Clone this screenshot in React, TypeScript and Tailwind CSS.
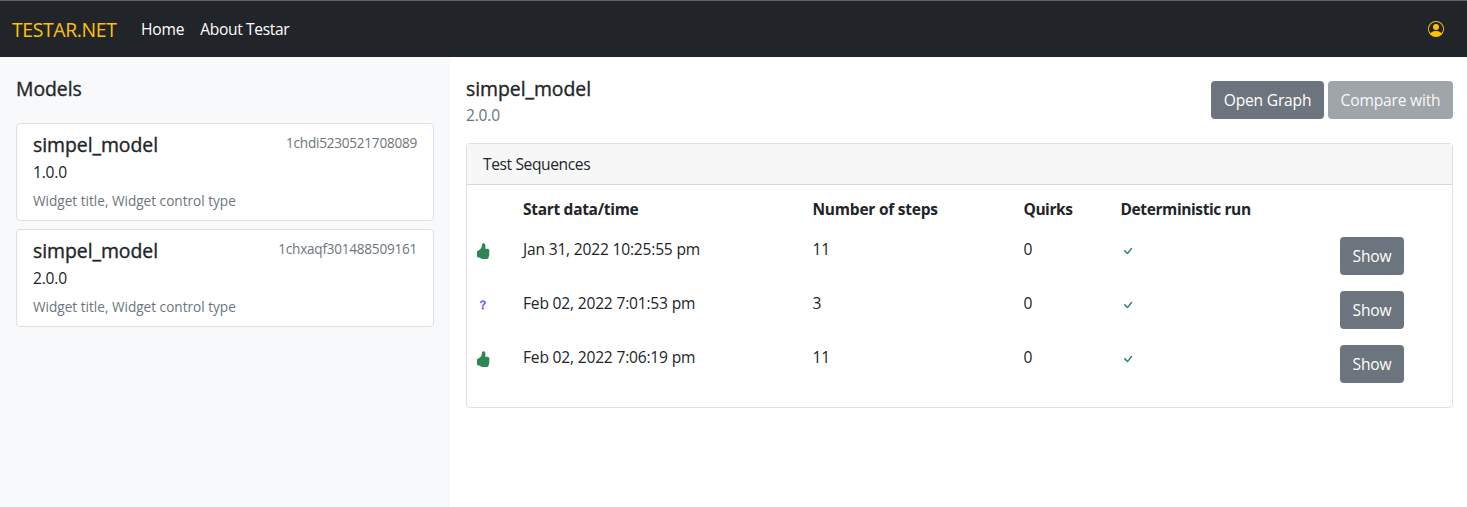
import { BsCheck, BsHandThumbsUpFill, BsPersonCircle, BsQuestion } from "react-icons/bs";

const models = [
  { name: "simpel_model", version: "1.0.0", id: "1chdi5230521708089" },
  { name: "simpel_model", version: "2.0.0", id: "1chxaqf301488509161" },
];

const sequences = [
  { passed: true, start: "Jan 31, 2022 10:25:55 pm", steps: 11, quirks: 0 },
  { passed: false, start: "Feb 02, 2022 7:01:53 pm", steps: 3, quirks: 0 },
  { passed: true, start: "Feb 02, 2022 7:06:19 pm", steps: 11, quirks: 0 },
];

const columns = "grid grid-cols-[48px_289.5px_211px_97px_219.5px_1fr]";
const heading = "text-[19.4px] leading-6 tracking-[-0.04px] [-webkit-text-stroke:0.35px_#212529]";
const button = "h-[38px] rounded text-white";

function NavBar() {
  return (
    <nav className="flex h-[57px] shrink-0 items-center border-t border-[#5f6163] bg-[#212529] px-3 text-white">
      <a className="mr-[24.5px] pt-px text-[19.4px] leading-[30px] tracking-[-0.36px] text-[#ffc107]">TESTAR.NET</a>
      <a className="mr-4">Home</a>
      <a className="tracking-[-0.37px]">About Testar</a>
      <BsPersonCircle className="mr-[11px] ml-auto size-4 text-[#ffc107]" />
    </nav>
  );
}

function ModelCard({ name, version, id }: (typeof models)[number]) {
  return (
    <article className="h-[98px] rounded border border-[#dfdfdf] bg-white px-4 pt-[9px]">
      <div className="flex h-6 justify-between">
        <h5 className={heading}>{name}</h5>
        <small className="text-[13.6px] leading-[19px] tracking-[-0.25px] text-[#6c757d]">{id}</small>
      </div>
      <p className="mt-[3px] mb-[5px]">{version}</p>
      <small className="block text-[13.6px] leading-[23px] tracking-normal text-[#6c757d]">
        Widget title, Widget control type
      </small>
    </article>
  );
}

export default function App() {
  return (
    <div className="flex h-[507px] flex-col overflow-hidden bg-white font-['Open_Sans',sans-serif] text-[15.6px] leading-6 tracking-[-0.2px] text-[#212529]">
      <NavBar />
      <div className="flex flex-1">
        <aside className="w-[450px] bg-[#f8f9fb] px-4 pt-5">
          <h5 className={`${heading} mb-[22px]`}>Models</h5>
          <div className="flex flex-col gap-2">
            {models.map((m) => (
              <ModelCard key={m.id} {...m} />
            ))}
          </div>
        </aside>
        <main className="flex-1 pr-[14px] pl-4">
          <div className="flex h-[86px] justify-between">
            <div className="pt-5">
              <h5 className={heading}>simpel_model</h5>
              <p className="mt-0.5 text-[#6c757d]">2.0.0</p>
            </div>
            <div className="flex gap-1 pt-6">
              <button className={`${button} w-[113px] bg-[#6c757d]`}>Open Graph</button>
              <button className={`${button} w-[125px] bg-[#a0a5aa] text-white/95`}>Compare with</button>
            </div>
          </div>
          <section className="h-[265px] rounded border border-[#dfdfdf]">
            <header className="h-[41px] border-b border-[#d8d8d8] bg-[#f7f7f7] px-4 pt-2 tracking-[-0.4px]">
              Test Sequences
            </header>
            <div className="pt-1">
              <div className={`${columns} h-10 text-[15.5px] font-bold tracking-[-0.3px]`}>
                <span />
                <span className="p-2">Start data/time</span>
                <span className="p-2 tracking-[-0.23px]">Number of steps</span>
                <span className="p-2 tracking-[-0.45px]">Quirks</span>
                <span className="p-2 tracking-[-0.4px]">Deterministic run</span>
              </div>
              {sequences.map((s) => (
                <div key={s.start} className={`${columns} h-[54px]`}>
                  <span className="px-2 pt-[14px]">
                    {s.passed ? (
                      <BsHandThumbsUpFill className="size-4 text-[#2e8555]" />
                    ) : (
                      <BsQuestion className="size-4 stroke-[#6060ff] stroke-[0.4px] text-[#6060ff]" />
                    )}
                  </span>
                  <span className="p-2">{s.start}</span>
                  <span className="p-2">{s.steps}</span>
                  <span className="p-2">{s.quirks}</span>
                  <span className="px-[7px] pt-[14px]">
                    <BsCheck className="size-4 text-[#2e8555]" />
                  </span>
                  <span className="p-2">
                    <button className={`${button} block w-16 bg-[#6c757d]`}>Show</button>
                  </span>
                </div>
              ))}
            </div>
          </section>
        </main>
      </div>
    </div>
  );
}
